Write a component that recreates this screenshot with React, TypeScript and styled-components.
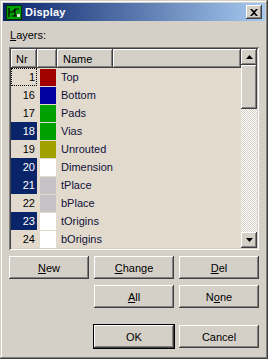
import React from 'react';
import styled, { createGlobalStyle } from 'styled-components';

const GlobalStyle = createGlobalStyle`
  html, body {
    margin: 0;
    padding: 0;
    background: #d4d0c8;
  }
  body {
    font-family: 'Liberation Sans', Arial, sans-serif;
    font-size: 11px;
    color: #000;
  }
`;

const raised = `
  box-shadow: inset -1px -1px #404040, inset 1px 1px #fff,
    inset -2px -2px #808080, inset 2px 2px #d4d0c8;
`;

interface Layer {
  nr: number;
  color: string;
  name: string;
  selected?: boolean;
  focused?: boolean;
}

const layers: Layer[] = [
  { nr: 1, color: '#a00000', name: 'Top', focused: true },
  { nr: 16, color: '#0000a0', name: 'Bottom' },
  { nr: 17, color: '#00a000', name: 'Pads' },
  { nr: 18, color: '#00a000', name: 'Vias', selected: true },
  { nr: 19, color: '#a0a000', name: 'Unrouted' },
  { nr: 20, color: '#ffffff', name: 'Dimension', selected: true },
  { nr: 21, color: '#c6c3c6', name: 'tPlace', selected: true },
  { nr: 22, color: '#c6c3c6', name: 'bPlace' },
  { nr: 23, color: '#ffffff', name: 'tOrigins', selected: true },
  { nr: 24, color: '#ffffff', name: 'bOrigins' },
];

const Window = styled.div`
  width: 268px;
  height: 359px;
  box-sizing: border-box;
  padding: 3px;
  display: flex;
  flex-direction: column;
  background: #d4d0c8;
  box-shadow: inset -1px -1px #404040, inset 1px 1px #d4d0c8,
    inset -2px -2px #808080, inset 2px 2px #fff;
`;

const TitleBar = styled.div`
  height: 18px;
  display: flex;
  align-items: center;
  gap: 3px;
  padding: 0 3px 0 3px;
  background: linear-gradient(to right, #0a246a, #a6caf0);
`;

const Title = styled.span`
  flex: 1;
  color: #fff;
  font-weight: bold;
  font-size: 11px;
  letter-spacing: 0.2px;
`;

const CloseButton = styled.button`
  width: 16px;
  height: 14px;
  padding: 0;
  border: none;
  background: #d4d0c8;
  display: flex;
  align-items: center;
  justify-content: center;
  ${raised}
`;

const Body = styled.div`
  flex: 1;
  display: flex;
  flex-direction: column;
  padding: 0 6px;
`;

const Label = styled.div`
  line-height: 13px;
  margin: 8px 0 5px 1px;
`;

const Key = styled.span`
  text-decoration: underline;
`;

const ListBox = styled.div`
  height: 203px;
  box-sizing: border-box;
  padding: 2px;
  display: flex;
  background: #e2dbcd;
  box-shadow: inset 1px 1px #808080, inset -1px -1px #fff,
    inset 2px 2px #404040, inset -2px -2px #d4d0c8;
`;

const ListContent = styled.div`
  flex: 1;
  display: flex;
  flex-direction: column;
`;

const HeaderRow = styled.div`
  display: grid;
  grid-template-columns: 26px 20px 56px 1fr;
  height: 19px;
  background: #d4d0c8;
`;

const HeaderCell = styled.div<{ $pad?: number }>`
  display: flex;
  align-items: center;
  padding-left: ${(p) => p.$pad ?? 5}px;
  ${raised}
`;

const Row = styled.div`
  display: grid;
  grid-template-columns: 26px 20px 1fr;
  height: 18px;
  align-items: center;
`;

const NrCell = styled.div<{ $selected?: boolean; $focused?: boolean }>`
  height: 18px;
  box-sizing: border-box;
  display: flex;
  align-items: center;
  justify-content: flex-end;
  padding-right: 1px;
  background: ${(p) => (p.$selected ? '#0a246a' : 'transparent')};
  color: ${(p) => (p.$selected ? '#fff' : '#000')};
  border: 1px dotted ${(p) => (p.$focused ? '#000' : 'transparent')};
`;

const Swatch = styled.div<{ $color: string }>`
  width: 16px;
  height: 17px;
  margin-left: 3px;
  align-self: start;
  margin-top: 1px;
  background: ${(p) => p.$color};
`;

const NameCell = styled.div`
  padding-left: 4px;
  color: #10103a;
`;

const ScrollBar = styled.div`
  width: 16px;
  display: flex;
  flex-direction: column;
`;

const ScrollButton = styled.div`
  height: 16px;
  background: #d4d0c8;
  display: flex;
  align-items: center;
  justify-content: center;
  ${raised}
`;

const Thumb = styled.div`
  height: 44px;
  background: #d4d0c8;
  ${raised}
`;

const Track = styled.div`
  flex: 1;
  background: repeating-conic-gradient(#fff 0% 25%, #d4d0c8 0% 50%) 0 0 / 2px 2px;
`;

const ButtonGrid = styled.div<{ $top: number }>`
  display: grid;
  grid-template-columns: repeat(3, 80px);
  column-gap: 5px;
  row-gap: 6px;
  margin-top: ${(p) => p.$top}px;
`;

const Button = styled.button<{ $col?: number; $default?: boolean }>`
  grid-column: ${(p) => p.$col ?? 'auto'};
  height: 23px;
  padding: 0;
  border: none;
  background: #d4d0c8;
  font-family: 'Liberation Sans', Arial, sans-serif;
  font-size: 11px;
  color: #000;
  ${raised}
  outline: ${(p) => (p.$default ? '1px solid #000' : 'none')};
`;

const AppIcon = () => (
  <svg width="16" height="15" viewBox="0 0 16 15">
    <rect x="0.5" y="0.5" width="15" height="14" fill="#00a000" stroke="#003000" />
    <path d="M3 3v9M3 7h4l2-3h4M9 4v7M6 11h7" stroke="#000" strokeWidth="1.2" fill="none" />
    <rect x="11" y="9" width="3" height="3" fill="#e0e0e0" />
  </svg>
);

const CloseIcon = () => (
  <svg width="8" height="7" viewBox="0 0 8 7">
    <path d="M0 0h2l2 2 2-2h2L5 3.5 8 7H6L4 5 2 7H0l3-3.5z" fill="#000" />
  </svg>
);

const Arrow = ({ down }: { down?: boolean }) => (
  <svg width="7" height="4" viewBox="0 0 7 4">
    <path d={down ? 'M0 0h7L3.5 4z' : 'M0 4h7L3.5 0z'} fill="#000" />
  </svg>
);

export default function App() {
  return (
    <>
      <GlobalStyle />
      <Window>
        <TitleBar>
          <AppIcon />
          <Title>Display</Title>
          <CloseButton aria-label="Close">
            <CloseIcon />
          </CloseButton>
        </TitleBar>
        <Body>
          <Label>
            <Key>L</Key>ayers:
          </Label>
          <ListBox>
            <ListContent>
              <HeaderRow>
                <HeaderCell>Nr</HeaderCell>
                <HeaderCell />
                <HeaderCell $pad={6}>Name</HeaderCell>
                <HeaderCell />
              </HeaderRow>
              {layers.map((l) => (
                <Row key={l.nr}>
                  <NrCell $selected={l.selected} $focused={l.focused}>
                    {l.nr}
                  </NrCell>
                  <Swatch $color={l.color} />
                  <NameCell>{l.name}</NameCell>
                </Row>
              ))}
            </ListContent>
            <ScrollBar>
              <ScrollButton>
                <Arrow />
              </ScrollButton>
              <Thumb />
              <Track />
              <ScrollButton>
                <Arrow down />
              </ScrollButton>
            </ScrollBar>
          </ListBox>
          <ButtonGrid $top={6}>
            <Button>
              <Key>N</Key>ew
            </Button>
            <Button>
              <Key>C</Key>hange
            </Button>
            <Button>
              <Key>D</Key>el
            </Button>
            <Button $col={2}>
              <Key>A</Key>ll
            </Button>
            <Button $col={3}>
              N<Key>o</Key>ne
            </Button>
          </ButtonGrid>
          <ButtonGrid $top={17}>
            <Button $col={2} $default>
              OK
            </Button>
            <Button $col={3}>Cancel</Button>
          </ButtonGrid>
        </Body>
      </Window>
    </>
  );
}
